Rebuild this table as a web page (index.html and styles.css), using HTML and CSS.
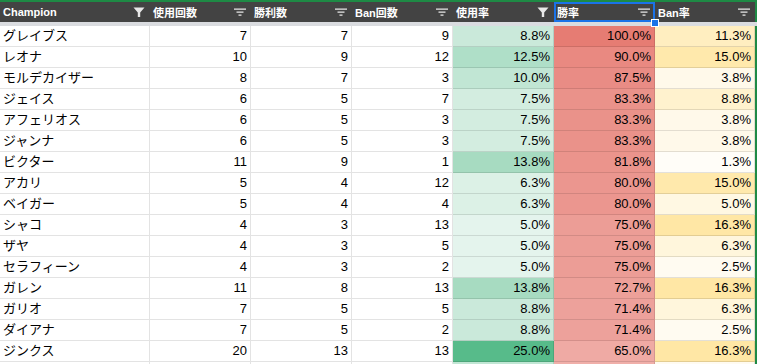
FILE: index.html
```html
<!DOCTYPE html>
<html lang="ja">
<head>
<meta charset="utf-8">
<link rel="stylesheet" href="styles.css">
</head>
<body>
<div class="sheet">
  <div class="hrow">
    <div class="hcell"><span class="htext">Champion</span><svg class="ico" viewBox="0 0 12 12"><path d="M0.5 1.5h11L7.2 6.5V11H4.8V6.5z"/></svg></div>
    <div class="hcell"><span class="htext">使用回数</span><svg class="ico" viewBox="0 0 12 12"><path d="M0 2.5h12v1.2H0zM2.5 5.5h7v1.2h-7zM4.5 8.5h3v1.2h-3z"/></svg></div>
    <div class="hcell"><span class="htext">勝利数</span><svg class="ico" viewBox="0 0 12 12"><path d="M0 2.5h12v1.2H0zM2.5 5.5h7v1.2h-7zM4.5 8.5h3v1.2h-3z"/></svg></div>
    <div class="hcell"><span class="htext">Ban回数</span><svg class="ico" viewBox="0 0 12 12"><path d="M0 2.5h12v1.2H0zM2.5 5.5h7v1.2h-7zM4.5 8.5h3v1.2h-3z"/></svg></div>
    <div class="hcell"><span class="htext">使用率</span><svg class="ico" viewBox="0 0 12 12"><path d="M0.5 1.5h11L7.2 6.5V11H4.8V6.5z"/></svg></div>
    <div class="hcell selected"><span class="htext">勝率</span><svg class="ico" viewBox="0 0 12 12"><path d="M0 2.5h12v1.2H0zM2.5 5.5h7v1.2h-7zM4.5 8.5h3v1.2h-3z"/></svg><span class="handle"></span></div>
    <div class="hcell"><span class="htext">Ban率</span><svg class="ico" viewBox="0 0 12 12"><path d="M0 2.5h12v1.2H0zM2.5 5.5h7v1.2h-7zM4.5 8.5h3v1.2h-3z"/></svg></div>
  </div>

  <div class="row"><div class="c name">グレイブス</div><div class="c">7</div><div class="c">7</div><div class="c">9</div><div class="c" style="background:rgb(202,233,218)">8.8%</div><div class="c" style="background:rgb(230,124,115)">100.0%</div><div class="c" style="background:rgb(255,238,192)">11.3%</div></div>
  <div class="row"><div class="c name">レオナ</div><div class="c">10</div><div class="c">9</div><div class="c">12</div><div class="c" style="background:rgb(175,223,200)">12.5%</div><div class="c" style="background:rgb(233,137,129)">90.0%</div><div class="c" style="background:rgb(255,233,172)">15.0%</div></div>
  <div class="row"><div class="c name">モルデカイザー</div><div class="c">8</div><div class="c">7</div><div class="c">3</div><div class="c" style="background:rgb(193,230,212)">10.0%</div><div class="c" style="background:rgb(233,140,133)">87.5%</div><div class="c" style="background:rgb(255,249,234)">3.8%</div></div>
  <div class="row"><div class="c name">ジェイス</div><div class="c">6</div><div class="c">5</div><div class="c">7</div><div class="c" style="background:rgb(211,237,224)">7.5%</div><div class="c" style="background:rgb(234,146,138)">83.3%</div><div class="c" style="background:rgb(255,242,206)">8.8%</div></div>
  <div class="row"><div class="c name">アフェリオス</div><div class="c">6</div><div class="c">5</div><div class="c">3</div><div class="c" style="background:rgb(211,237,224)">7.5%</div><div class="c" style="background:rgb(234,146,138)">83.3%</div><div class="c" style="background:rgb(255,249,234)">3.8%</div></div>
  <div class="row"><div class="c name">ジャンナ</div><div class="c">6</div><div class="c">5</div><div class="c">3</div><div class="c" style="background:rgb(211,237,224)">7.5%</div><div class="c" style="background:rgb(234,146,138)">83.3%</div><div class="c" style="background:rgb(255,249,234)">3.8%</div></div>
  <div class="row"><div class="c name">ビクター</div><div class="c">11</div><div class="c">9</div><div class="c">1</div><div class="c" style="background:rgb(167,219,193)">13.8%</div><div class="c" style="background:rgb(235,148,140)">81.8%</div><div class="c" style="background:rgb(255,253,248)">1.3%</div></div>
  <div class="row"><div class="c name">アカリ</div><div class="c">5</div><div class="c">4</div><div class="c">12</div><div class="c" style="background:rgb(220,241,230)">6.3%</div><div class="c" style="background:rgb(235,150,143)">80.0%</div><div class="c" style="background:rgb(255,233,172)">15.0%</div></div>
  <div class="row"><div class="c name">ベイガー</div><div class="c">5</div><div class="c">4</div><div class="c">4</div><div class="c" style="background:rgb(220,241,230)">6.3%</div><div class="c" style="background:rgb(235,150,143)">80.0%</div><div class="c" style="background:rgb(255,248,227)">5.0%</div></div>
  <div class="row"><div class="c name">シャコ</div><div class="c">4</div><div class="c">3</div><div class="c">13</div><div class="c" style="background:rgb(228,244,237)">5.0%</div><div class="c" style="background:rgb(236,157,150)">75.0%</div><div class="c" style="background:rgb(255,231,165)">16.3%</div></div>
  <div class="row"><div class="c name">ザヤ</div><div class="c">4</div><div class="c">3</div><div class="c">5</div><div class="c" style="background:rgb(228,244,237)">5.0%</div><div class="c" style="background:rgb(236,157,150)">75.0%</div><div class="c" style="background:rgb(255,246,220)">6.3%</div></div>
  <div class="row"><div class="c name">セラフィーン</div><div class="c">4</div><div class="c">3</div><div class="c">2</div><div class="c" style="background:rgb(228,244,237)">5.0%</div><div class="c" style="background:rgb(236,157,150)">75.0%</div><div class="c" style="background:rgb(255,251,241)">2.5%</div></div>
  <div class="row"><div class="c name">ガレン</div><div class="c">11</div><div class="c">8</div><div class="c">13</div><div class="c" style="background:rgb(167,219,193)">13.8%</div><div class="c" style="background:rgb(237,160,153)">72.7%</div><div class="c" style="background:rgb(255,231,165)">16.3%</div></div>
  <div class="row"><div class="c name">ガリオ</div><div class="c">7</div><div class="c">5</div><div class="c">5</div><div class="c" style="background:rgb(202,233,218)">8.8%</div><div class="c" style="background:rgb(237,161,155)">71.4%</div><div class="c" style="background:rgb(255,246,220)">6.3%</div></div>
  <div class="row"><div class="c name">ダイアナ</div><div class="c">7</div><div class="c">5</div><div class="c">2</div><div class="c" style="background:rgb(202,233,218)">8.8%</div><div class="c" style="background:rgb(237,161,155)">71.4%</div><div class="c" style="background:rgb(255,251,241)">2.5%</div></div>
  <div class="row"><div class="c name">ジンクス</div><div class="c">20</div><div class="c">13</div><div class="c">13</div><div class="c" style="background:rgb(87,187,138)">25.0%</div><div class="c" style="background:rgb(239,170,164)">65.0%</div><div class="c" style="background:rgb(255,231,165)">16.3%</div></div>
  <div class="row"><div class="c name"></div><div class="c"></div><div class="c"></div><div class="c"></div><div class="c" style="background:rgb(193,230,212)"></div><div class="c" style="background:rgb(240,175,169)"></div><div class="c" style="background:rgb(255,251,241)"></div></div>
</div>
</body>
</html>
```

FILE: styles.css
```css
html, body {
  margin: 0;
  padding: 0;
  background: #fff;
  overflow: hidden;
}

.sheet {
  width: 757px;
  border-top: 2px solid #1e8a45;
  font-family: "Liberation Sans", Arial, "Noto Sans CJK JP", sans-serif;
  color: #000;
}

.hrow,
.row {
  display: grid;
  grid-template-columns: 150px 101px 101px 101px 101px 101px 100px 2px;
}

.hrow {
  height: 24px;
  background: #434343;
  box-sizing: border-box;
  border-bottom: 4px solid #dadce0;
}

.hrow::after,
.row::after {
  content: "";
  background: #1e8a45;
}

.hcell {
  position: relative;
  display: flex;
  align-items: center;
  justify-content: space-between;
  padding: 0 5px 0 3px;
  box-sizing: border-box;
  height: 20px;
  color: #fff;
  font-weight: bold;
  font-size: 11px;
}

.htext {
  white-space: nowrap;
}

.ico {
  width: 12px;
  height: 12px;
  fill: #e8e8e8;
  flex: none;
}

.selected {
  box-shadow: inset 0 0 0 2px #1a73e8;
}

.handle {
  position: absolute;
  right: -4px;
  bottom: -5px;
  width: 6px;
  height: 6px;
  background: #1a73e8;
  border: 1px solid #fff;
  z-index: 2;
}

.row {
  height: 21px;
}

.c {
  box-sizing: border-box;
  height: 21px;
  border-right: 1px solid rgba(0, 0, 0, 0.11);
  border-bottom: 1px solid rgba(0, 0, 0, 0.11);
  font-size: 13px;
  line-height: 20px;
  text-align: right;
  padding: 0 3px;
  white-space: nowrap;
  overflow: hidden;
}

.c.name {
  text-align: left;
}
```
